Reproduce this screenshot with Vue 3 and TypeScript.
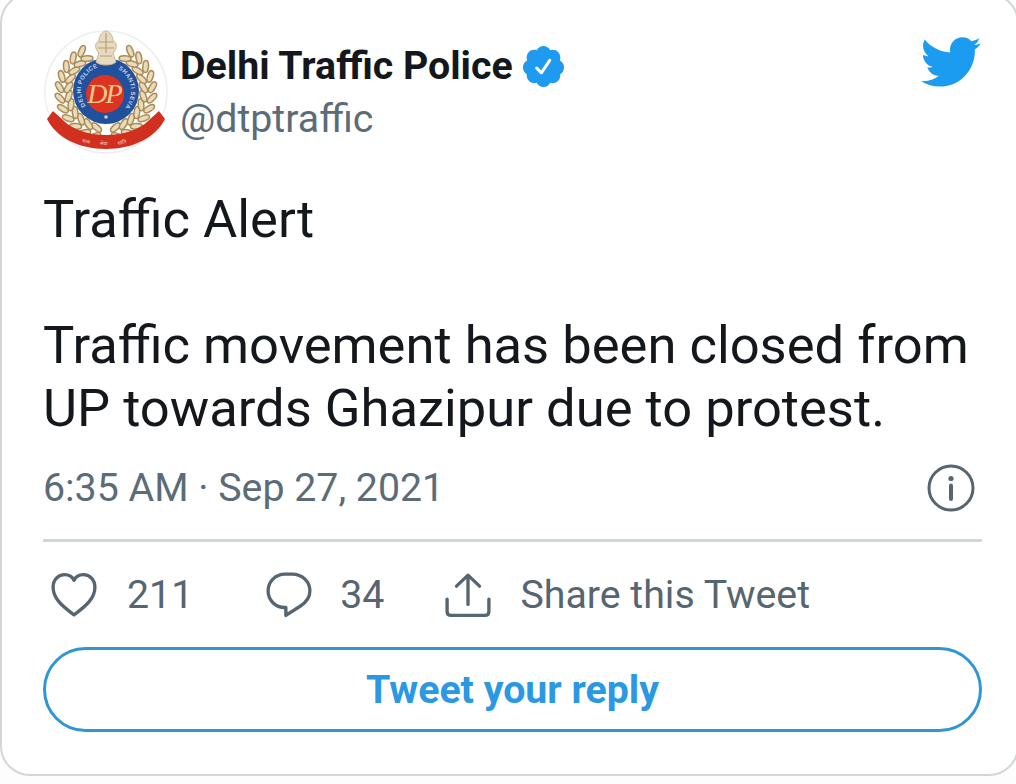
<script setup lang="ts">
const leaves: { x: number; y: number; r: number }[] = [];
for (let i = 0; i < 11; i++) {
  const deg = 100 + i * 13.5;
  const a = (deg * Math.PI) / 180;
  leaves.push({ x: 62 + 42 * Math.cos(a), y: 62 + 42 * Math.sin(a), r: deg + 90 });
}
</script>

<template>
  <main class="card">
    <header class="head">
      <svg class="emblem" viewBox="0 0 124 128" role="img" aria-label="Delhi Police emblem">
        <circle cx="62" cy="63" r="61" fill="#fff" stroke="#eceeef" stroke-width="1.5" />
        <g v-for="side in [1, -1]" :key="side" :transform="side === -1 ? 'translate(124 0) scale(-1 1)' : undefined">
          <g v-for="(l, i) in leaves" :key="i" :transform="`translate(${l.x} ${l.y}) rotate(${l.r})`">
            <ellipse cx="3" cy="-4.5" rx="6" ry="2.8" fill="#e9dbb8" stroke="#a98b57" stroke-width="1.5" transform="rotate(-32 3 -4.5)" />
            <ellipse cx="3" cy="4.5" rx="6" ry="2.8" fill="#e9dbb8" stroke="#a98b57" stroke-width="1.5" transform="rotate(32 3 4.5)" />
          </g>
        </g>
        <path d="M3 90 L9 82 L20 92 C28 100 44 106 62 106 C80 106 96 100 104 92 L115 82 L121 90 C112 108 90 120 62 120 C34 120 12 108 3 90Z" fill="#d2301f" />
        <text class="hindi" x="38" y="113" transform="rotate(14 38 113)">सत्य</text>
        <text class="hindi" x="56" y="116">सेवा</text>
        <text class="hindi" x="74" y="116" transform="rotate(-12 74 116)">शांति</text>
        <circle cx="62" cy="62" r="33" fill="#21509c" />
        <circle cx="61" cy="65" r="19" fill="#df3322" />
        <defs>
          <path id="arcL" d="M45.900 81.200 A25 25 0 0 1 59.800 37.100" />
          <path id="arcR" d="M70.600 38.500 A25 25 0 0 1 78.100 81.200" />
        </defs>
        <text class="ring"><textPath href="#arcL" startOffset="6">DELHI POLICE</textPath></text>
        <text class="ring"><textPath href="#arcR" startOffset="4">SHANTI SEVA</textPath></text>
        <circle cx="62" cy="88" r="1.8" fill="#c8cfd8" />
        <text class="mono" x="60" y="74">DP</text>
        <path d="M52 33 L55 24 C50 19 51 13 55 12 C55 6 59 2 62 2 C65 2 69 6 69 12 C73 13 74 19 69 24 L72 33 C68 37 56 37 52 33Z" fill="#e6dbc2" stroke="#cbb991" stroke-width="1" />
        <path d="M55 13 H69 M54 19 H70 M56 27 H68 M62 4 V24" stroke="#b79f6f" stroke-width="1.2" fill="none" />
      </svg>
      <div class="who">
        <div class="name-row">
          <span class="name">Delhi Traffic Police</span>
          <svg class="badge" viewBox="0 0 24 24" aria-hidden="true">
            <path d="M22.5 12.5c0-1.58-.875-2.95-2.148-3.6.154-.435.238-.905.238-1.4 0-2.21-1.71-3.998-3.818-3.998-.47 0-.92.084-1.336.25C14.818 2.415 13.51 1.5 12 1.5s-2.816.917-3.437 2.25c-.415-.165-.866-.25-1.336-.25-2.11 0-3.818 1.79-3.818 4 0 .494.083.964.237 1.4-1.272.65-2.147 2.018-2.147 3.6 0 1.495.782 2.798 1.942 3.486-.02.17-.032.34-.032.514 0 2.21 1.708 4 3.818 4 .47 0 .92-.086 1.335-.25.62 1.334 1.926 2.25 3.437 2.25 1.512 0 2.818-.916 3.437-2.25.415.163.865.248 1.336.248 2.11 0 3.818-1.79 3.818-4 0-.174-.012-.344-.033-.513 1.158-.687 1.943-1.99 1.943-3.484zm-6.616-3.334l-4.334 6.5c-.145.217-.382.334-.625.334-.143 0-.288-.04-.416-.126l-.115-.094-2.415-2.415c-.293-.293-.293-.768 0-1.06s.768-.294 1.06 0l1.77 1.767 3.825-5.74c.23-.345.696-.436 1.04-.207.346.23.44.696.21 1.04z" />
          </svg>
        </div>
        <div class="handle">@dtptraffic</div>
      </div>
      <svg class="bird" viewBox="0 0 24 24" aria-hidden="true">
        <path d="M23.643 4.937c-.835.37-1.732.62-2.675.733.962-.576 1.7-1.49 2.048-2.578-.9.534-1.897.922-2.958 1.13-.85-.904-2.06-1.47-3.4-1.47-2.572 0-4.658 2.086-4.658 4.66 0 .364.042.718.12 1.06-3.873-.195-7.304-2.05-9.602-4.868-.4.69-.63 1.49-.63 2.342 0 1.616.823 3.043 2.072 3.878-.764-.025-1.482-.234-2.11-.583v.06c0 2.257 1.605 4.14 3.737 4.568-.392.106-.803.162-1.227.162-.3 0-.593-.028-.877-.082.593 1.85 2.313 3.198 4.352 3.234-1.595 1.25-3.604 1.995-5.786 1.995-.376 0-.747-.022-1.112-.065 2.062 1.323 4.51 2.093 7.14 2.093 8.57 0 13.255-7.098 13.255-13.254 0-.2-.005-.402-.014-.602.91-.658 1.7-1.477 2.323-2.41z" />
      </svg>
    </header>

    <div class="body">
      <p>Traffic Alert</p>
      <p class="gap">Traffic movement has been closed from<br />UP towards Ghazipur due to protest.</p>
    </div>

    <div class="meta">
      <span>6:35 AM · Sep 27, 2021</span>
      <svg class="info" viewBox="0 0 48 48" aria-hidden="true">
        <circle cx="24" cy="24" r="22" fill="none" stroke="#56656f" stroke-width="3" />
        <circle cx="24" cy="14.5" r="2.6" fill="#56656f" />
        <path d="M24 21.5V35" stroke="#56656f" stroke-width="4" stroke-linecap="round" />
      </svg>
    </div>

    <div class="actions">
      <span class="action like">
        <svg viewBox="0 0 44 44" aria-hidden="true"><path d="M22 41C10 32 2 25 2 14.500C2 7.500 7 2.500 13 2.500C17 2.500 20.500 4.500 22 8C23.500 4.500 27 2.500 31 2.500C37 2.500 42 7.500 42 14.500C42 25 34 32 22 41Z" /></svg>
        211
      </span>
      <span class="action reply">
        <svg viewBox="0 0 44 44" aria-hidden="true"><path d="M18 2H25C35 2 42 9.500 42 18C42 24 38.500 29 33 32.500L19 41.500V34H18C9 34 2 27 2 18C2 9.500 9 2 18 2Z" /></svg>
        34
      </span>
      <span class="action share">
        <svg viewBox="0 0 44 44" aria-hidden="true"><path d="M22 31V3M11 13.500L22 3L33 13.500M2 26V37.500C2 40 3.500 41.500 6 41.500H38C40.500 41.500 42 40 42 37.500V26" /></svg>
        Share this Tweet
      </span>
    </div>

    <button class="cta" type="button">Tweet your reply</button>
  </main>
</template>

<style>
html, body { margin: 0; background: #fdfdfd; overflow: hidden; }
</style>

<style scoped>
.card {
  box-sizing: border-box;
  width: 1019px;
  height: 783px;
  margin-top: -7px;
  padding: 34px 35px 0 41px;
  background: #fff;
  border: 2px solid #d1d6d8;
  border-radius: 30px;
  font-family: Roboto, "Liberation Sans", sans-serif;
  color: #14181c;
}
.head { display: flex; align-items: flex-start; }
.emblem { width: 124px; height: 128px; flex: none; overflow: visible; margin-left: 1px; }
.hindi { font-family: "Noto Sans", sans-serif; font-size: 5px; fill: #f4d9c8; }
.ring { font-family: "Liberation Sans", sans-serif; font-size: 6px; font-weight: 700; fill: #cdd6e6; letter-spacing: .4px; }
.mono { font-family: "Liberation Serif", serif; font-style: italic; font-size: 28px; font-weight: 400; fill: #f0c88a; text-anchor: middle; letter-spacing: -2px; }
.who { margin-left: 12px; padding-top: 15px; flex: 1; }
.name-row { display: flex; align-items: center; height: 44px; }
.name { font-size: 39.3px; font-weight: 700; }
.badge { width: 47px; height: 47px; fill: #1e9bf0; margin-left: 7px; }
.handle { font-size: 39.3px; line-height: 44px; color: #5b6c78; margin-top: 9px; }
.bird { width: 64px; height: 64px; fill: #1c9cf0; margin: 1px 0 0 0; }
.body { margin-top: 31px; font-size: 52.5px; line-height: 63px; }
.body p { margin: 0; }
.body .gap { margin-top: 63px; }
.meta { display: flex; align-items: center; justify-content: space-between; margin-top: 24px; height: 48px; font-size: 39.3px; color: #5b6c78; }
.info { width: 48px; height: 48px; margin-right: 7px; }
.actions { display: flex; align-items: center; margin-top: 27px; padding-top: 30px; border-top: 3px solid #d0d7db; height: 46px; font-size: 39.3px; color: #56656f; }
.action { display: inline-flex; align-items: center; }
.action svg { width: 46px; height: 46px; fill: none; stroke: #56656f; stroke-width: 3.2; stroke-linejoin: round; stroke-linecap: round; }
.like { margin-left: 8px; gap: 30px; }
.reply { margin-left: 73px; gap: 28px; }
.share { margin-left: 61px; gap: 29px; }
.cta {
  display: block;
  box-sizing: border-box;
  width: 939px;
  height: 85px;
  margin-top: 29px;
  background: #fff;
  border: 3px solid #2f96d6;
  border-radius: 43px;
  font: 700 39.3px Roboto, "Liberation Sans", sans-serif;
  color: #2a98e2;
}
</style>
